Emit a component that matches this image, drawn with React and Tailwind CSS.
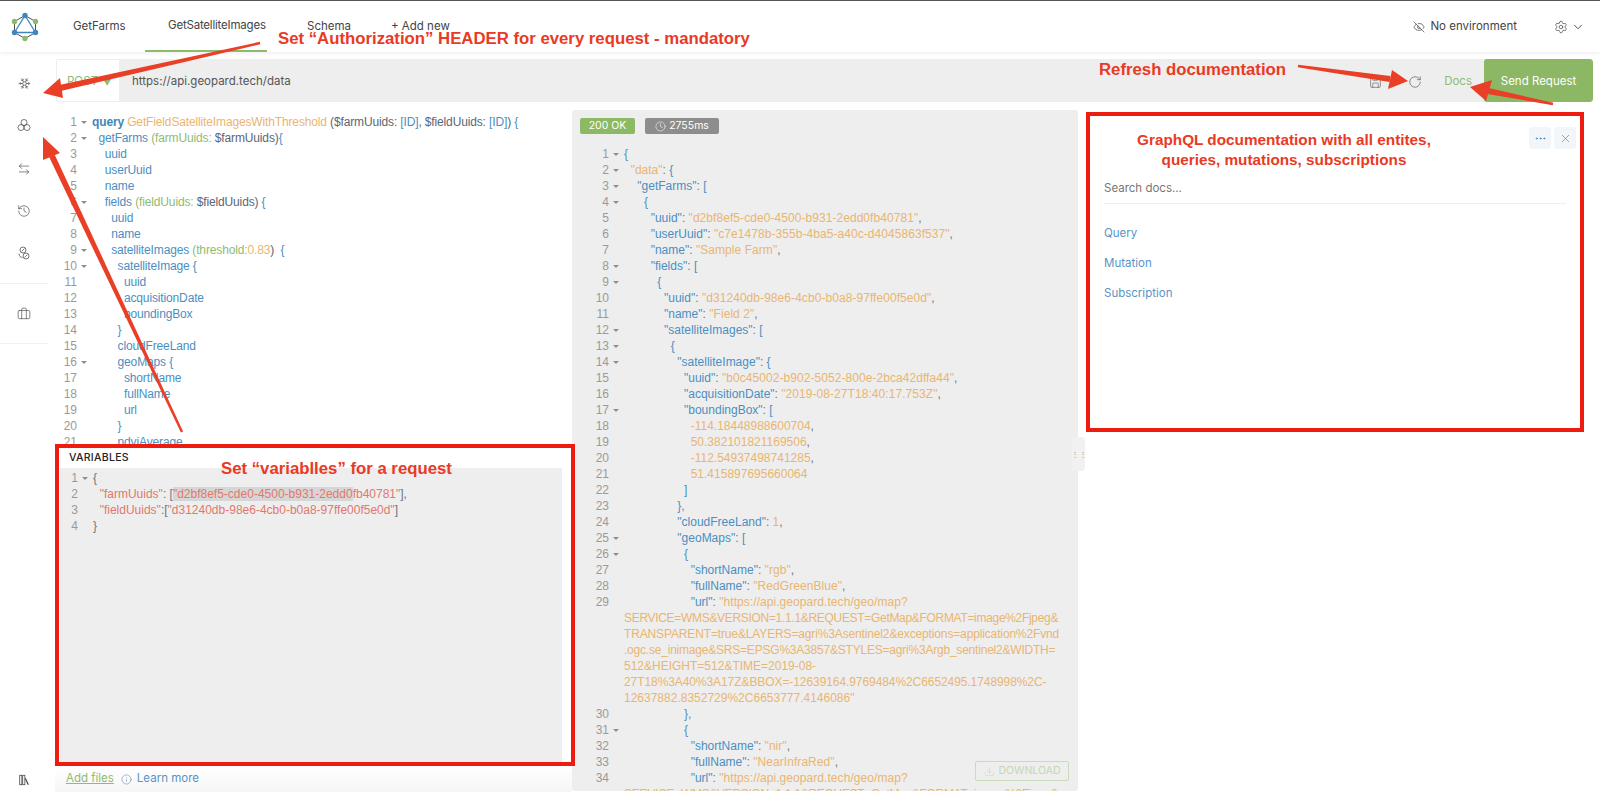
import React from "react";
import {
  Snowflake,
  ArrowLeftRight,
  History,
  Briefcase,
  EyeOff,
  Settings,
  ChevronDown,
  Save,
  RotateCw,
  Ellipsis,
  X,
  Info,
  Clock,
  Download,
} from "lucide-react";

// token colours
const K = "text-[#4a8fc2]"; // field / key blue
const Q = "font-bold text-[#3f86bd]"; // keyword
const O = "text-[#eab56f]"; // orange values
const V = "text-[#eab56f] tracking-[0.06px]"; // orange json values
const G = "text-[#8fbb72]"; // args
const D = "text-[#5c6670]"; // $vars
const R = "text-[#e2786c]"; // variables red
const H = "bg-[#d6d6d6] text-[#e2786c]";
const S = "text-[#6b7680]"; // punctuation

const queryLines = [
  { f: 1, t: [[Q, "query "], [O, "GetFieldSatelliteImagesWithThreshold "], [D, "($farmUuids: "], [K, "[ID]"], [D, ", $fieldUuids: "], [K, "[ID]"], [D, ") "], [K, "{"]] },
  { f: 1, t: [[K, "  getFarms "], [G, "(farmUuids: "], [D, "$farmUuids)"], [K, "{"]] },
  { t: [[K, "    uuid"]] },
  { t: [[K, "    userUuid"]] },
  { t: [[K, "    name"]] },
  { f: 1, t: [[K, "    fields "], [G, "(fieldUuids: "], [D, "$fieldUuids) "], [K, "{"]] },
  { t: [[K, "      uuid"]] },
  { t: [[K, "      name"]] },
  { f: 1, t: [[K, "      satelliteImages "], [G, "(threshold:"], [O, "0.83"], [D, ")  "], [K, "{"]] },
  { f: 1, t: [[K, "        satelliteImage {"]] },
  { t: [[K, "          uuid"]] },
  { t: [[K, "          acquisitionDate"]] },
  { t: [[K, "          boundingBox"]] },
  { t: [[K, "        }"]] },
  { t: [[K, "        cloudFreeLand"]] },
  { f: 1, t: [[K, "        geoMaps {"]] },
  { t: [[K, "          shortName"]] },
  { t: [[K, "          fullName"]] },
  { t: [[K, "          url"]] },
  { t: [[K, "        }"]] },
  { t: [[K, "        ndviAverage"]] },
];

const varLines = [
  { f: 1, t: [[S, "{"]] },
  { t: [[R, "  \"farmUuids\""], [S, ": ["], [H, "\"d2bf8ef5-cde0-4500-b931-2edd0"], [R, "fb40781\""], [S, "],"]] },
  { t: [[R, "  \"fieldUuids\""], [S, ":["], [R, "\"d31240db-98e6-4cb0-b0a8-97ffe00f5e0d\""], [S, "]"]] },
  { t: [[S, "}"]] },
];

const kv = (indent, key, val, tail = ",") => ({
  t: [[K, indent + `"${key}"`], [S, ": "], [V, val], [S, tail]],
});
const open = (indent, key, br) => ({
  f: 1,
  t: [[K, indent + `"${key}"`], [S, ": "], [K, br]],
});
const p = (text, f) => ({ f, t: [[K, text]] });
const num = (indent, val, tail = ",") => ({ t: [[O, indent + val], [S, tail]] });
const wrap = (text, cls = "") => ({ wrap: true, t: [[`${O} ${cls}`, text]] });

const resLines = [
  p("{", 1),
  { f: 1, t: [[O, "  \"data\""], [S, ": "], [K, "{"]] },
  open("    ", "getFarms", "["),
  p("      {", 1),
  kv("        ", "uuid", "\"d2bf8ef5-cde0-4500-b931-2edd0fb40781\""),
  kv("        ", "userUuid", "\"c7e1478b-355b-4ba5-a40c-d4045863f537\""),
  kv("        ", "name", "\"Sample Farm\""),
  open("        ", "fields", "["),
  p("          {", 1),
  kv("            ", "uuid", "\"d31240db-98e6-4cb0-b0a8-97ffe00f5e0d\""),
  kv("            ", "name", "\"Field 2\""),
  open("            ", "satelliteImages", "["),
  p("              {", 1),
  open("                ", "satelliteImage", "{"),
  kv("                  ", "uuid", "\"b0c45002-b902-5052-800e-2bca42dffa44\""),
  kv("                  ", "acquisitionDate", "\"2019-08-27T18:40:17.753Z\""),
  open("                  ", "boundingBox", "["),
  num("                    ", "-114.18448988600704"),
  num("                    ", "50.382101821169506"),
  num("                    ", "-112.54937498741285"),
  num("                    ", "51.415897695660064", ""),
  p("                  ]"),
  p("                },"),
  kv("                ", "cloudFreeLand", "1"),
  open("                ", "geoMaps", "["),
  p("                  {", 1),
  kv("                    ", "shortName", "\"rgb\""),
  kv("                    ", "fullName", "\"RedGreenBlue\""),
  kv("                    ", "url", "\"https://api.geopard.tech/geo/map?", ""),
  wrap("SERVICE=WMS&VERSION=1.1.1&REQUEST=GetMap&FORMAT=image%2Fjpeg&", "tracking-[-0.31px]"),
  wrap("TRANSPARENT=true&LAYERS=agri%3Asentinel2&exceptions=application%2Fvnd", "tracking-[-0.14px]"),
  wrap(".ogc.se_inimage&SRS=EPSG%3A3857&STYLES=agri%3Argb_sentinel2&WIDTH=", "tracking-[-0.21px]"),
  wrap("512&HEIGHT=512&TIME=2019-08-"),
  wrap("27T18%3A40%3A17Z&BBOX=-12639164.9769484%2C6652495.1748998%2C-", "tracking-[-0.08px]"),
  wrap("12637882.8352729%2C6653777.4146086\""),
  p("                  },"),
  p("                  {", 1),
  kv("                    ", "shortName", "\"nir\""),
  kv("                    ", "fullName", "\"NearInfraRed\""),
  kv("                    ", "url", "\"https://api.geopard.tech/geo/map?", ""),
  wrap("SERVICE=WMS&VERSION=1.1.1&REQUEST=GetMap&FORMAT=image%2Fjpeg&", "tracking-[-0.31px]"),
];

function CodeRows({ lines, numClass, textClass = "" }) {
  let n = 0;
  return (
    <div className="font-['Liberation_Sans',Arial,sans-serif] text-[12px] leading-[16px]">
      {lines.map((line, i) => {
        if (!line.wrap) n += 1;
        return (
          <div key={i} className="flex h-[16px]">
            <div className={`${numClass} shrink-0 text-right text-[#9a9a9a]`}>{line.wrap ? "" : n}</div>
            <div className="w-[15px] shrink-0 pl-[4px] pt-[7px]">
              {line.f ? (
                <div className="h-0 w-0 border-x-[3px] border-t-[3px] border-x-transparent border-t-[#8e8e8e]" />
              ) : null}
            </div>
            <pre className={`font-['Liberation_Sans',Arial,sans-serif] whitespace-pre ${textClass}`}>
              {line.t.map(([cls, text], j) => (
                <span key={j} className={cls}>
                  {text}
                </span>
              ))}
            </pre>
          </div>
        );
      })}
    </div>
  );
}

function Logo() {
  return (
    <svg width="50" height="52" viewBox="0 0 50 52" fill="none">
      <path d="M25 14.5 35.5 20.5V31.5L25 37.5 14.5 31.5V20.5Z" stroke="#222" strokeWidth="0.8" />
      <path d="M25 14.5 35.5 31.5H14.5Z" stroke="#3f86bd" strokeWidth="1.3" />
      <circle cx="25" cy="14.5" r="2.7" fill="#3f86bd" />
      <circle cx="35.5" cy="31.5" r="2.7" fill="#3f86bd" />
      <circle cx="14.5" cy="31.5" r="2.7" fill="#3f86bd" />
      <circle cx="35.5" cy="20.5" r="2.7" fill="#8cbb69" />
      <circle cx="14.5" cy="20.5" r="2.7" fill="#8cbb69" />
      <circle cx="25" cy="37.5" r="2.7" fill="#8cbb69" />
    </svg>
  );
}

function CirclesIcon() {
  return (
    <svg width="14" height="14" viewBox="0 0 14 14" fill="none" stroke="#555" strokeWidth="0.8">
      <circle cx="7" cy="4.5" r="3" />
      <circle cx="4" cy="9.5" r="3" />
      <circle cx="10" cy="9.5" r="3" />
    </svg>
  );
}

function CogsIcon() {
  return (
    <svg width="12" height="14" viewBox="0 0 12 14" fill="none" stroke="#555" strokeWidth="0.8">
      <circle cx="5" cy="4" r="3" />
      <circle cx="8" cy="10" r="3" />
      <path d="M3.5 5.5 6.5 2.5M6.5 11.5 9.5 8.5M1 7.5C1 10 2.5 11.5 4.5 11.5" />
    </svg>
  );
}

function BooksIcon() {
  return (
    <svg width="12" height="12" viewBox="0 0 14 14" fill="none" stroke="#444" strokeWidth="0.9">
      <rect x="2" y="1.5" width="2.5" height="11" />
      <rect x="5.5" y="1.5" width="2.5" height="11" />
      <path d="M8.5 5 12 12.5" strokeWidth="1.4" />
    </svg>
  );
}

function SideIcon({ children }) {
  return <div className="flex h-[42px] items-center justify-center">{children}</div>;
}

function Tab({ children, active, className }) {
  return (
    <div
      className={`flex h-[51px] items-center ${className} ${
        active ? "border-b-2 border-[#8cbb69]" : ""
      }`}
    >
      {children}
    </div>
  );
}

function Arrow({ tail, neck, head1, tip, head2, w = 3, t = 1.2 }) {
  // tapered shaft running from tail to neck and a filled triangle head
  const dx = neck[0] - tail[0];
  const dy = neck[1] - tail[1];
  const len = Math.hypot(dx, dy);
  const ux = -dy / len;
  const uy = dx / len;
  const shaft = [
    [tail[0] + ux * t, tail[1] + uy * t],
    [neck[0] + ux * w, neck[1] + uy * w],
    [neck[0] - ux * w, neck[1] - uy * w],
    [tail[0] - ux * t, tail[1] - uy * t],
  ]
    .map((pt) => pt.join(","))
    .join(" ");
  return (
    <g fill="#ea3f27">
      <polygon points={shaft} />
      <polygon points={`${head1[0]},${head1[1]} ${tip[0]},${tip[1]} ${head2[0]},${head2[1]}`} />
    </g>
  );
}

function Annotations() {
  const note = "absolute whitespace-nowrap font-['Liberation_Sans',Arial,sans-serif] font-bold text-[#e93a25]";
  return (
    <>
      <svg className="pointer-events-none absolute left-0 top-0 z-20" width="1600" height="799">
        <Arrow tail={[260, 42]} neck={[60, 87]} head1={[60, 77]} tip={[43, 92]} head2={[63, 97]} />
        <Arrow tail={[182, 431]} neck={[52, 155]} head1={[60, 152]} tip={[43, 136]} head2={[43, 159]} />
        <Arrow tail={[1298, 65]} neck={[1390, 78]} head1={[1392, 69]} tip={[1408, 80]} head2={[1388, 88]} />
        <Arrow tail={[1553, 103]} neck={[1488, 90]} head1={[1492, 79]} tip={[1470, 86]} head2={[1486, 100]} />
      </svg>
      <div className={`${note} left-[278px] top-[28px] z-30 text-[16.75px] leading-[20px]`}>Set “Authorization” HEADER for every request - mandatory</div>
      <div className={`${note} left-[1099px] top-[59px] z-30 text-[16.75px] leading-[20px]`}>Refresh documentation</div>
      <div className={`${note} left-[221px] top-[458px] z-30 text-[16.75px] leading-[20px]`}>Set “variablles” for a request</div>
      <div className={`${note} left-[1086px] top-[129px] z-30 w-[396px] text-center text-[15.3px] leading-[19.5px]`}>
        GraphQL documentation with all entites,
        <br />
        queries, mutations, subscriptions
      </div>
    </>
  );
}

export default function App() {
  return (
    <div className="relative flex h-[799px] w-[1600px] flex-col overflow-hidden border-t border-[#555] bg-white font-['Inter',sans-serif]">
      {/* top bar */}
      <header className="flex h-[51px] shrink-0 items-center bg-white text-[11.5px] text-[#444] shadow-[0_1px_4px_rgba(0,0,0,0.08)]">
        <Logo />
        <Tab className="ml-[23px] w-[72px]">GetFarms</Tab>
        <Tab active className="w-[122px] pl-[23px] tracking-[-0.2px]">GetSatelliteImages</Tab>
        <Tab className="ml-[40px] w-[84px]">Schema</Tab>
        <Tab>+ Add new</Tab>
        <div className="ml-auto flex items-center">
          <EyeOff size={12} strokeWidth={1.4} className="mr-[5px]" />
          <span>No environment</span>
          <Settings size={14} strokeWidth={1.2} className="ml-[37px]" />
          <ChevronDown size={14} strokeWidth={1.6} className="ml-[3px] mr-[15px]" />
        </div>
      </header>

      <div className="flex min-h-0 flex-1">
        {/* sidebar */}
        <aside className="flex w-[48px] shrink-0 flex-col pt-[10px] text-[#444]">
          <SideIcon><Snowflake size={13} strokeWidth={1.2} /></SideIcon>
          <SideIcon><CirclesIcon /></SideIcon>
          <div className="mt-[2px]">
            <SideIcon><ArrowLeftRight size={14} strokeWidth={1.1} /></SideIcon>
          </div>
          <SideIcon><History size={14} strokeWidth={1.1} /></SideIcon>
          <SideIcon><CogsIcon /></SideIcon>
          <div className="mt-[9px] border-t border-[#f1f1f1]" />
          <div className="mt-[9px]">
            <SideIcon><Briefcase size={14} strokeWidth={1.1} /></SideIcon>
          </div>
          <div className="mt-[8px] border-t border-[#f1f1f1]" />
          <div className="mb-[13px] mt-auto flex justify-center"><BooksIcon /></div>
        </aside>

        <main className="min-w-0 flex-1 pt-[7px]">
          {/* url bar */}
          <div className="ml-[8px] mr-[7px] flex h-[43px] overflow-hidden rounded-[3px] bg-[#eeeeee] text-[11.5px]">
            <div className="flex w-[63px] items-center gap-[4px] border border-r-0 border-[#eeeeee] bg-white pl-[10px] pt-[3px] text-[#8fbb72]">
              POST <span className="text-[10px]">▼</span>
            </div>
            <div className="flex flex-1 items-center pl-[13px] pt-[3px] text-[#555]">https://api.geopard.tech/data</div>
            <div className="flex items-center text-[#555]">
              <Save size={13} strokeWidth={1.1} className="mt-[3px]" />
              <RotateCw size={14} strokeWidth={1.1} className="ml-[26px] mt-[3px]" />
              <span className="ml-[22px] mt-[3px] text-[#8fbb72]">Docs</span>
              <button className="ml-[12px] flex h-[43px] w-[109px] items-center justify-center rounded-[3px] bg-[#8cb765] pt-[3px] text-white">
                Send Request
              </button>
            </div>
          </div>

          <div className="mt-[8px] flex">
            {/* left pane */}
            <section className="w-[524px] shrink-0 pl-[7px]">
              <div className="h-[334px] overflow-hidden pt-[4px]">
                <CodeRows lines={queryLines} numClass="w-[22px]" textClass="tracking-[-0.14px]" />
              </div>
              <div className="relative z-10 flex h-[322px] w-[520px] flex-col border-4 border-[#ee1c0e] bg-white">
                <div className="flex h-[20px] shrink-0 items-center pl-[10px] text-[10.5px] font-medium tracking-[0.3px] text-[#222]">VARIABLES</div>
                <div className="ml-[1px] mr-[9px] flex-1 bg-[#eeeeee] pt-[2px]">
                  <CodeRows lines={varLines} numClass="w-[18px]" />
                </div>
              </div>
              <div className="flex h-[26px] items-center bg-gradient-to-b from-white to-[#f6f6f6] pl-[11px] text-[11.5px]">
                <span className="text-[#8fbb72] underline">Add files</span>
                <Info size={11} strokeWidth={1.3} className="ml-[7px] mr-[5px] text-[#5a93c4]" />
                <span className="text-[#5a93c4]">Learn more</span>
              </div>
            </section>

            {/* response */}
            <section className="relative h-[681px] w-[506px] shrink-0 overflow-hidden rounded-[3px] bg-[#eeeeee]">
              <div className="ml-[8px] mt-[8px] flex h-[16px] gap-[10px] text-[10.5px] text-white">
                <div className="flex w-[55px] items-center justify-center rounded-[2px] bg-[#8bb964]">200 OK</div>
                <div className="flex w-[74px] items-center justify-center gap-[3px] rounded-[2px] bg-[#8d8d8d]">
                  <Clock size={11} strokeWidth={1.2} />
                  2755ms
                </div>
              </div>
              <div className="mt-[12px]">
                <CodeRows lines={resLines} numClass="w-[37px]" />
              </div>
              <div className="absolute bottom-[10px] right-[9px] flex h-[20px] w-[94px] items-center justify-center gap-[4px] rounded-[2px] border border-[#c9dcb9] bg-[#eeeeee]/60 text-[10.5px] text-[#c3d8b1]">
                <Download size={11} strokeWidth={1.2} />
                DOWNLOAD
              </div>
            </section>

            {/* docs */}
            <section className="ml-[8px] mt-[2px] h-[320px] w-[498px] shrink-0 border-4 border-[#ee1c0e] bg-white text-[11.5px]">
              <div className="flex justify-end gap-[3px] pr-[4px] pt-[11px]">
                <div className="flex h-[22px] w-[22px] items-center justify-center rounded-[3px] bg-[#f2f6fa] text-[#3f86bd]">
                  <Ellipsis size={13} strokeWidth={1.6} />
                </div>
                <div className="flex h-[22px] w-[22px] items-center justify-center rounded-[3px] bg-[#f2f6fa] text-[#3f86bd]">
                  <X size={13} strokeWidth={1.2} />
                </div>
              </div>
              <div className="mx-[14px] mt-[31px] h-[24px] border-b border-[#eeeeee] text-[#777]">Search docs...</div>
              <div className="ml-[14px] mt-[21px] flex flex-col gap-[14px] text-[#5a93c4]">
                <div className="leading-[16px]">Query</div>
                <div className="leading-[16px]">Mutation</div>
                <div className="leading-[16px]">Subscription</div>
              </div>
            </section>
          </div>
        </main>
      </div>

      {/* drag handle */}
      <div className="absolute left-[1072px] top-[436px] z-0 flex h-[34px] w-[13px] items-center justify-center rounded-[4px] bg-[#f1f1f1] text-[8px] leading-[4px] text-[#999]">⋮⋮</div>

      <Annotations />
    </div>
  );
}
